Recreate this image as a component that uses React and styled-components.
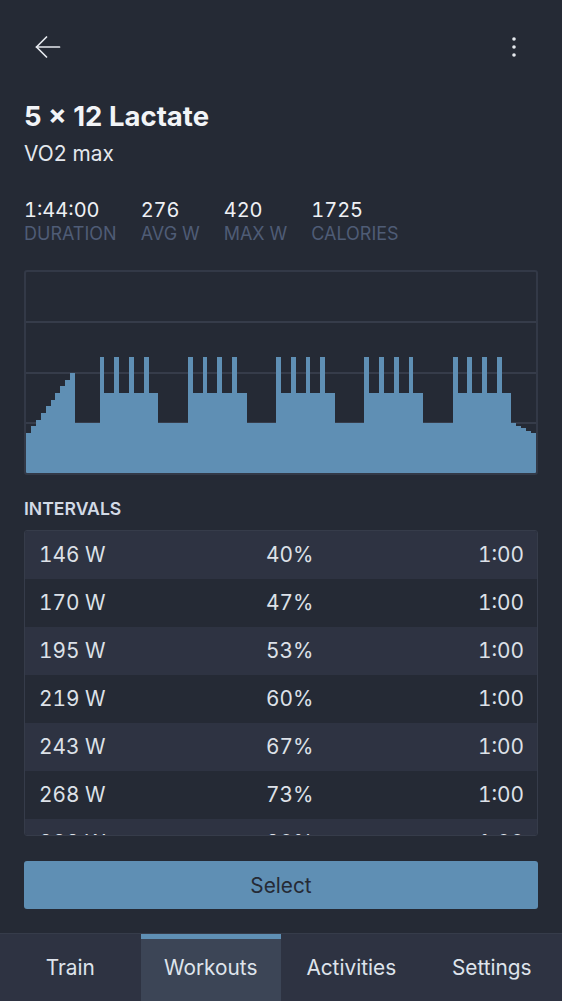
import React from "react";
import styled, { createGlobalStyle } from "styled-components";

const warmup = [40, 47, 53, 60, 67, 73, 80, 87, 93, 100].map(p => [p, 1]);
const block = [
  [115, 1], [80, 2], [115, 1], [80, 2],
  [115, 1], [80, 2], [115, 1], [80, 2]
];
const segments = [
  ...warmup,
  [50, 5],
  ...block, [50, 6],
  ...block, [50, 6],
  ...block, [50, 6],
  ...block, [50, 6],
  ...block,
  [50, 1], [47, 1], [45, 1], [42, 1], [40, 1]
];

const intervals = [
  ["146 W", "40%"],
  ["170 W", "47%"],
  ["195 W", "53%"],
  ["219 W", "60%"],
  ["243 W", "67%"],
  ["268 W", "73%"],
  ["292 W", "80%"],
  ["317 W", "87%"],
  ["341 W", "93%"]
];

const stats = [
  ["1:44:00", "Duration"],
  ["276", "Avg W"],
  ["420", "Max W"],
  ["1725", "Calories"]
];

const tabs = ["Train", "Workouts", "Activities", "Settings"];

function Chart() {
  const total = segments.reduce((s, seg) => s + seg[1], 0);
  let t = 0;
  const bars = segments.map(([p, d], i) => {
    const x = t;
    t += d;
    return <rect key={i} x={x} y={200 - p} width={d} height={p} fill="#5f8fb4" />;
  });
  return (
    <svg width="100%" height="100%" viewBox={`0 0 ${total} 200`} preserveAspectRatio="none" shapeRendering="crispEdges">
      {[50, 100, 150].map(y => (
        <line key={y} x1="0" x2={total} y1={y} y2={y} stroke="#363c4a" strokeWidth="2" vectorEffect="non-scaling-stroke" />
      ))}
      {bars}
    </svg>
  );
}

export default function App() {
  return (
    <>
      <GlobalStyle />
      <Page>
        <Content>
          <Header>
            <IconButton aria-label="back">
              <svg width="26" height="22" viewBox="0 0 26 22" fill="none" stroke="#e6e9ee" strokeWidth="1.7" strokeLinecap="round" strokeLinejoin="round">
                <path d="M1.5 11H24.5" />
                <path d="M11.5 1L1.5 11L11.5 21" />
              </svg>
            </IconButton>
            <IconButton aria-label="more">
              <svg width="24" height="24" viewBox="0 0 24 24" fill="#e6e9ee">
                <circle cx="12" cy="4" r="1.8" />
                <circle cx="12" cy="12" r="1.8" />
                <circle cx="12" cy="20" r="1.8" />
              </svg>
            </IconButton>
          </Header>

          <Title>5 × 12 Lactate</Title>
          <Subtitle>VO2 max</Subtitle>

          <Stats>
            {stats.map(([v, l]) => (
              <Stat key={l}>
                <StatValue>{v}</StatValue>
                <StatLabel>{l}</StatLabel>
              </Stat>
            ))}
          </Stats>

          <ChartBox>
            <Chart />
          </ChartBox>

          <SectionLabel>Intervals</SectionLabel>
          <List>
            {intervals.map(([w, p], i) => (
              <Row key={i} $odd={i % 2 === 0}>
                <span>{w}</span>
                <span>{p}</span>
                <Time>1:00</Time>
              </Row>
            ))}
          </List>

          <SelectButton>Select</SelectButton>
        </Content>

        <TabBar>
          {tabs.map(t => (
            <Tab key={t} $active={t === "Workouts"}>{t}</Tab>
          ))}
        </TabBar>
      </Page>
    </>
  );
}

const GlobalStyle = createGlobalStyle`
  * { box-sizing: border-box; }
  body {
    margin: 0;
    background: #252a35;
    font-family: Inter, "Noto Sans", sans-serif;
    font-variant-numeric: tabular-nums;
    color: #e4e8ee;
  }
`;

const Page = styled.div`
  display: flex;
  flex-direction: column;
  min-height: 100vh;
`;

const Content = styled.div`
  flex: 1;
  padding: 23px 24px 24px;
  display: flex;
  flex-direction: column;
`;

const Header = styled.div`
  display: flex;
  justify-content: space-between;
  align-items: center;
  height: 48px;
`;

const IconButton = styled.button`
  width: 48px;
  height: 48px;
  display: flex;
  align-items: center;
  justify-content: center;
  background: none;
  border: none;
  padding: 0;
`;

const Title = styled.h1`
  margin: 29px 0 0;
  font-size: 27.5px;
  line-height: 32px;
  font-weight: 700;
  font-variant-numeric: normal;
  color: #f2f4f7;
`;

const Subtitle = styled.div`
  margin-top: 8px;
  font-size: 20.8px;
  line-height: 28px;
  color: #e4e8ee;
`;

const Stats = styled.div`
  display: flex;
  gap: 24px;
  margin-top: 29px;
`;

const Stat = styled.div`
  display: flex;
  flex-direction: column;
`;

const StatValue = styled.div`
  font-size: 20px;
  line-height: 26px;
  color: #eef0f4;
`;

const StatLabel = styled.div`
  font-size: 18px;
  line-height: 22px;
  text-transform: uppercase;
  color: #4f5c76;
`;

const ChartBox = styled.div`
  margin-top: 25px;
  height: 205px;
  border: 2px solid #333947;
  border-radius: 3px;
  overflow: hidden;
  svg { display: block; }
`;

const SectionLabel = styled.div`
  margin-top: 23px;
  font-size: 17.6px;
  line-height: 22px;
  font-weight: 600;
  text-transform: uppercase;
  color: #d3dae6;
`;

const List = styled.div`
  margin-top: 10px;
  height: 306px;
  border: 1px solid #363c4a;
  border-radius: 3px;
  overflow: hidden;
`;

const Row = styled.div`
  display: grid;
  grid-template-columns: 227px 1fr auto;
  align-items: center;
  height: 48px;
  padding: 0 13px 0 14px;
  font-size: 20.8px;
  line-height: 24px;
  color: #dde1e8;
  background: ${p => (p.$odd ? "#2e3342" : "#252a35")};
`;

const Time = styled.span`
  text-align: right;
`;

const SelectButton = styled.button`
  margin-top: 25px;
  height: 48px;
  border: none;
  border-radius: 3px;
  background: #5f8fb4;
  color: #252a35;
  font-family: inherit;
  font-size: 20.8px;
`;

const TabBar = styled.nav`
  display: grid;
  grid-template-columns: repeat(4, 1fr);
  height: 68px;
  background: #2e3342;
  border-top: 1px solid #363c4a;
`;

const Tab = styled.div`
  display: flex;
  align-items: center;
  justify-content: center;
  font-size: 20.8px;
  color: #dfe4ec;
  background: ${p => (p.$active ? "#3c4556" : "transparent")};
  box-shadow: ${p => (p.$active ? "inset 0 5px 0 #5f8fb4" : "none")};
`;
